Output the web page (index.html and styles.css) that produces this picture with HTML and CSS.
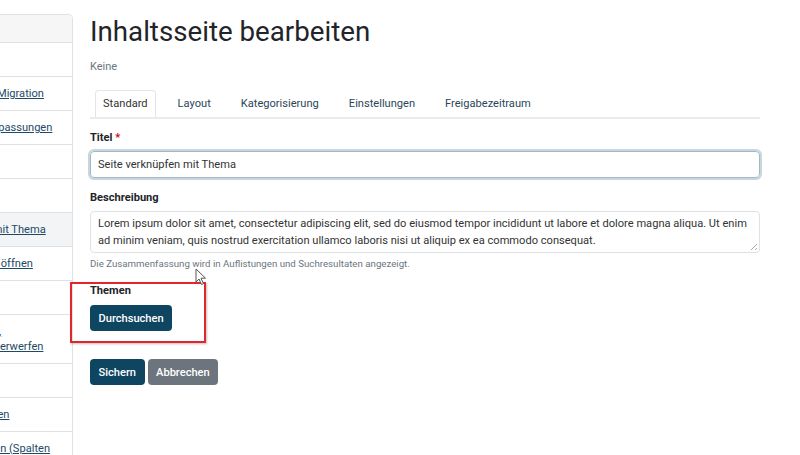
FILE: index.html
```html
<!DOCTYPE html>
<html lang="de">
<head>
  <meta charset="UTF-8">
  <title>Inhaltsseite bearbeiten</title>
  <link rel="stylesheet" href="styles.css">
</head>
<body>
  <div class="page">
    <aside class="sidebar">
      <div class="list-head"></div>
      <div class="item"></div>
      <div class="item"><a href="#">Daten-Übernahme und Migration</a></div>
      <div class="item"><a href="#">Individuellen Layout-Anpassungen</a></div>
      <div class="item"></div>
      <div class="item"></div>
      <div class="item active"><a href="#">Eine Seite verknüpfen mit Thema</a></div>
      <div class="item"><a href="#" class="wide">Dateien in einem Tab öffnen</a></div>
      <div class="item"></div>
      <div class="item"><a href="#">Seiten kopieren, ändern,<br>die Änderungen direkt verwerfen</a></div>
      <div class="item"></div>
      <div class="item"><a href="#">Inhaltsseiten verschieben</a></div>
      <div class="item"><a href="#">Die neue Tabelle anlegen (Spalten</a></div>
    </aside>

    <main class="content">
      <h1>Inhaltsseite bearbeiten</h1>
      <p class="muted">Keine</p>

      <ul class="tabs">
        <li class="tab active">Standard</li>
        <li class="tab">Layout</li>
        <li class="tab">Kategorisierung</li>
        <li class="tab">Einstellungen</li>
        <li class="tab">Freigabezeitraum</li>
      </ul>

      <div class="field first">
        <label>Titel <span class="req">*</span></label>
        <div class="input focus">Seite verknüpfen mit Thema</div>
      </div>

      <div class="field">
        <label>Beschreibung</label>
        <div class="input textarea">Lorem ipsum dolor sit amet, consectetur adipiscing elit, sed do eiusmod tempor incididunt ut labore et dolore magna aliqua. Ut enim<br>ad minim veniam, quis nostrud exercitation ullamco laboris nisi ut aliquip ex ea commodo consequat.<span class="grip"></span></div>
        <div class="help">Die Zusammenfassung wird in Auflistungen und Suchresultaten angezeigt.</div>
      </div>

      <div class="marked">
        <label>Themen</label>
        <button class="btn primary">Durchsuchen</button>
      </div>

      <div class="actions">
        <button class="btn primary">Sichern</button>
        <button class="btn secondary">Abbrechen</button>
      </div>
    </main>
  </div>

  <svg class="cursor" width="12" height="18" viewBox="0 0 12 18">
    <path d="M1 1 L1 14 L4 11 L6.5 16.5 L8.5 15.6 L6 10.2 L10.5 10.2 Z" fill="#fff" stroke="#555" stroke-width="1"/>
  </svg>
</body>
</html>
```

FILE: styles.css
```css
body{
  margin: 0;
  background-color: #ffffff;
  color: #212529;
  font-family: Roboto, "Liberation Sans", sans-serif;
  overflow: hidden;
}

.page{
  display: flex;
  align-items: flex-start;
}

/* left list, mostly scrolled out of view */
.sidebar{
  width: 200px;
  margin-left: -129px;
  margin-top: 14px;
  border: 1px solid #dee2e6;
  border-bottom: none;
  border-radius: 0 5px 0 0;
  flex-shrink: 0;
}

.list-head{
  height: 27px;
  background-color: #f6f6f6;
  border-radius: 0 5px 0 0;
}

.item{
  min-height: 15px;
  padding: 9px 10px 9px 12px;
  border-top: 1px solid #dee2e6;
  font-size: 11.1px;
  line-height: 15px;
  white-space: nowrap;
}

.item a{
  color: #1d4a66;
}

/* this one ends a bit further right than the others */
.item a.wide{
  margin-left: 11px;
}

.item.active{
  background-color: #f3f4f6;
}

.content{
  width: 670px;
  padding-left: 17px;
  flex-shrink: 0;
}

h1{
  margin: 14px 0 0;
  font-size: 27.7px;
  font-weight: 400;
  line-height: 35px;
}

.muted{
  margin: 11px 0 0;
  font-size: 11px;
  line-height: 13px;
  color: #6c757d;
}

.tabs{
  display: flex;
  gap: 14px;
  list-style: none;
  margin: 17px 0 0;
  padding: 0 0 0 5px;
  border-bottom: 2px solid #e9ecef;
}

.tab{
  padding: 5px 7px 6px;
  font-size: 11.1px;
  line-height: 15px;
  color: #2b4658;
  border: 1px solid transparent;
  border-bottom: none;
  border-radius: 4px 4px 0 0;
}

.tab.active{
  color: #333;
  border-color: #e3e6e9;
}

.field{
  margin-top: 12px;
}

.field.first{
  margin-top: 11px;
}

label{
  display: block;
  font-size: 11.1px;
  font-weight: 700;
  line-height: 15px;
  margin-bottom: 6px;
}

.req{
  color: #d0021b;
}

.input{
  position: relative;
  box-sizing: border-box;
  padding: 4px 7px;
  border: 1px solid #dee2e6;
  border-radius: 4px;
  font-size: 11.1px;
  line-height: 17px;
  color: #333;
}

.input.focus{
  height: 27px;
  border-color: #a4b8c4;
  box-shadow: 0 0 0 2px #c8d6de;
}

.textarea{
  height: 42px;
  padding-top: 3px;
  white-space: nowrap;
}

.grip{
  position: absolute;
  right: 2px;
  bottom: 2px;
  width: 6px;
  height: 6px;
  background: linear-gradient(135deg, transparent 45%, #aaa 45%, #aaa 55%, transparent 55%, transparent 75%, #aaa 75%, #aaa 85%, transparent 85%);
}

.help{
  margin-top: 5px;
  font-size: 9.7px;
  line-height: 12px;
  color: #6c757d;
}

.marked{
  width: 114px;
  margin: 12px 0 0 -20px;
  padding: 0 0 10px 18px;
  border: 2px solid #e3262b;
  box-shadow: 1px 1px 2px rgba(0,0,0,0.25);
}

.marked label{
  line-height: 13px;
  margin-bottom: 8px;
}

.btn{
  height: 26px;
  padding: 0 8.5px;
  border: none;
  border-radius: 4px;
  font-family: Roboto, "Liberation Sans", sans-serif;
  font-size: 11.1px;
  font-weight: 500;
  color: #fff;
}

.btn.primary{
  background-color: #0e4560;
}

.btn.secondary{
  background-color: #6c757d;
}

.actions{
  display: flex;
  gap: 3px;
  margin-top: 16px;
}

.cursor{
  position: absolute;
  left: 195px;
  top: 268px;
}
```
